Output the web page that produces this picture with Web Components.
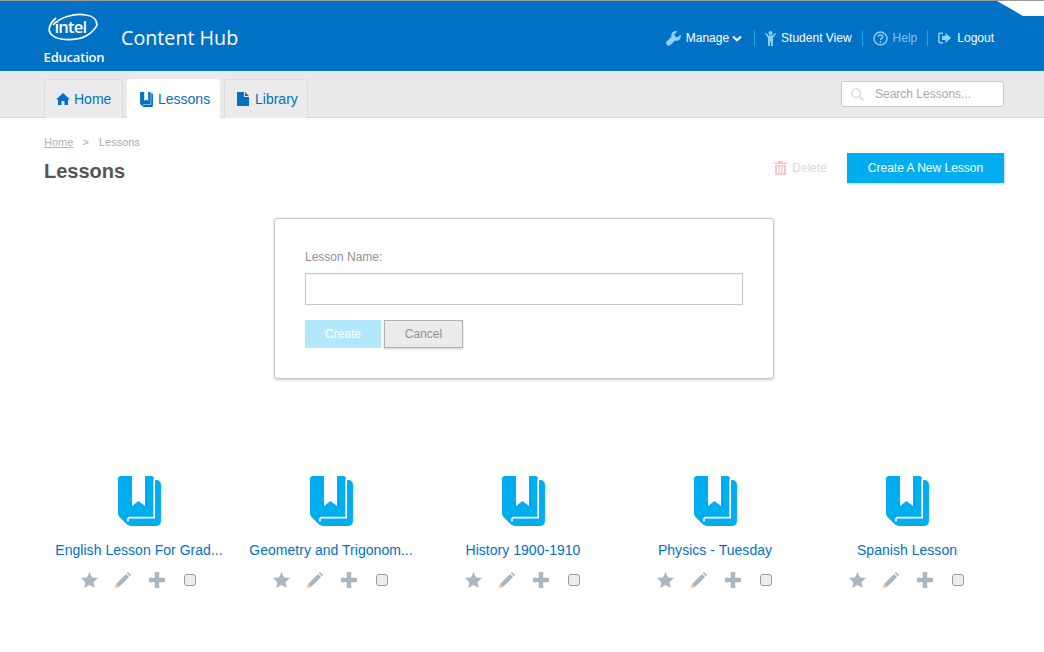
<!DOCTYPE html>
<html>
<head>
<meta charset="utf-8">
<style>
  html, body { margin: 0; padding: 0; background: #fff; }
  body { font-family: "Liberation Sans", Arial, sans-serif; }
</style>
</head>
<body>
<hub-header></hub-header>
<hub-tabs></hub-tabs>
<hub-titlebar></hub-titlebar>
<lesson-form></lesson-form>
<lesson-grid>
  <lesson-card>English Lesson For Grad...</lesson-card>
  <lesson-card>Geometry and Trigonom...</lesson-card>
  <lesson-card>History 1900-1910</lesson-card>
  <lesson-card>Physics - Tuesday</lesson-card>
  <lesson-card>Spanish Lesson</lesson-card>
</lesson-grid>

<script>
// the book is used both in the tab and on the cards, always on white
const bookIcon = (color, w, h) => `
    <svg width="${w}" height="${h}" viewBox="0 0 43 50">
        <path fill="${color}" d="M3 0H14V30L20.500 25 27 30V0H33C35 0 36 1 36 3V4H38C41 4 43 6 43 9V45C43 48 41 50 38 50H13C11 50 9.500 49 8 47.500L2 41.500C.5 40 0 38.500 0 37V3C0 1 1 0 3 0Z"/>
        <path fill="none" stroke="#fff" stroke-width="1.700" d="M36.200 3V41.700H12C10 41.700 9 43.500 10.500 45.500"/>
    </svg>`;

class HubHeader extends HTMLElement {
    constructor() {
        super();
        this.attachShadow({ mode: 'open' });
    }
    connectedCallback() {
        this.shadowRoot.innerHTML = `
            <style>
                :host { display: block; position: relative; height: 70px; background: #0071c5; border-top: 1px solid #9a9a9a; font-family: "Liberation Sans", Arial, sans-serif; }
                .bar { display: flex; align-items: center; height: 70px; padding: 0 50px 0 43px; }
                .logo { display: flex; flex-direction: column; align-items: center; width: 62px; color: #fff; margin-top: 8px; }
                .swoosh { position: relative; width: 50px; height: 27px; margin-left: -3px; top: -1px; }
                .swoosh svg { display: block; overflow: visible; }
                .swoosh span { position: absolute; left: 7px; top: 2px; font: 600 16.500px "Open Sans", "Liberation Sans", sans-serif; letter-spacing: -0.8px; line-height: 22px; }
                .edu { font: 600 13px "Open Sans", "Liberation Sans", sans-serif; line-height: 16px; margin-top: 7px; letter-spacing: -0.2px; }
                .name { font: 400 19.700px "Open Sans", sans-serif; color: #fff; margin-left: 16px; margin-top: 3px; }
                nav { display: flex; align-items: center; margin-left: auto; font-size: 12px; color: #fff; margin-top: 4px; }
                .item { display: flex; align-items: center; height: 16px; gap: 5px; }
                .item + .item { border-left: 1px solid #17a5e6; padding-left: 10px; margin-left: 10px; }
                .item + .item.student { margin-left: 12px; }
                .help { color: #7fc4ee; }
                .corner { position: absolute; right: 0; top: 0; }
            </style>
            <div class="bar">
                <div class="logo">
                    <div class="swoosh">
                        <svg width="50" height="27" viewBox="0 0 50 27" fill="none" stroke="#fff" stroke-width="1.700">
                            <path d="M8 4C1 10-1 17 4 21 10 27 28 27 38 22 43 19 47 16 49 11"/>
                            <path d="M5 11C12 3 27-1 38 1 45 2 49 6 49 11"/>
                        </svg>
                        <span>intel</span>
                    </div>
                    <div class="edu">Education</div>
                </div>
                <div class="name">Content Hub</div>
                <nav>
                    <div class="item">
                        <svg width="15" height="15" viewBox="0 0 15 15"><path fill="#8fd0f5" d="M14.600 3.400L11.600 6.300 9 5.600 8.400 3.200 11.400.3C9.600-.4 7.700 0 6.500 1.200 5.200 2.500 5 4.200 5.500 5.700L.6 10.600C-.2 11.400-.2 12.700.6 13.500L1.300 14.200C2.100 15 3.400 15 4.200 14.200L9.100 9.400C10.700 9.900 12.400 9.600 13.600 8.400 14.900 7.100 15.200 5 14.600 3.400Z"/></svg>
                        <span>Manage</span>
                        <svg style="margin-left:-2px" width="10" height="7" viewBox="0 0 10 7"><path d="M1 1.500L5 5.300 9 1.500" fill="none" stroke="#fff" stroke-width="2"/></svg>
                    </div>
                    <div class="item student">
                        <svg width="11" height="15" viewBox="0 0 11 15"><circle cx="5.500" cy="2" r="2" fill="#8fd0f5"/><path fill="#8fd0f5" d="M0 2.500L1 1.800 3.500 4.500H7.500L10 1.800 11 2.500 8 7V15H6V10.500H5V15H3V7Z"/></svg>
                        <span>Student View</span>
                    </div>
                    <div class="item help">
                        <svg width="15" height="15" viewBox="0 0 15 15"><circle cx="7.500" cy="7.500" r="6.500" fill="none" stroke="#8fd0f5" stroke-width="1.400"/><path d="M5.300 5.800C5.300 3.300 9.800 3.300 9.800 5.800 9.800 7.500 7.500 7.400 7.500 9" fill="none" stroke="#8fd0f5" stroke-width="1.500"/><rect x="6.700" y="10" width="1.600" height="1.700" fill="#8fd0f5"/></svg>
                        <span>Help</span>
                    </div>
                    <div class="item">
                        <svg width="13" height="12" viewBox="0 0 13 12"><path d="M5 1.200H2C1.200 1.200.8 1.700.8 2.500V9.500C.8 10.300 1.200 10.800 2 10.800H5" fill="none" stroke="#8fd0f5" stroke-width="1.500"/><path fill="#8fd0f5" d="M7.500 1L13 6 7.500 11V8H4V4H7.500Z"/></svg>
                        <span style="margin-left:1px">Logout</span>
                    </div>
                </nav>
            </div>
            <svg class="corner" width="48" height="16" viewBox="0 0 48 16"><path d="M1 0L27 15H48V0Z" fill="#fff"/></svg>
        `;
    }
}

class HubTabs extends HTMLElement {
    constructor() {
        super();
        this.attachShadow({ mode: 'open' });
    }
    connectedCallback() {
        this.shadowRoot.innerHTML = `
            <style>
                :host { display: flex; align-items: flex-end; height: 46px; background: #e9e9e9; border-bottom: 1px solid #d6d6d6; padding: 0 40px 0 44px; font-family: "Liberation Sans", Arial, sans-serif; }
                .tab { display: flex; align-items: center; gap: 4px; box-sizing: border-box; height: 39px; margin-bottom: -1px; border: 1px solid #d9d9d9; border-bottom: 0; border-radius: 4px 4px 0 0; background: #ebebeb; color: #0071c5; font-size: 14px; margin-right: 4px; }
                .tab.on { background: #fff; border-color: #fff; height: 39px; }
                .search { display: flex; align-items: center; box-sizing: border-box; width: 163px; height: 26px; margin: 0 0 10px auto; padding-left: 9px; background: #fff; border: 1px solid #c8c8c8; border-radius: 3px; color: #a8a8a8; font-size: 12px; gap: 11px; }
            </style>
            <div class="tab" style="width:79px;padding-left:11px">
                <svg width="14" height="12" viewBox="0 0 14 12"><path fill="#0071c5" d="M7 0L14 6.500H12V12H8.500V8H5.500V12H2V6.500H0Z"/></svg>
                <span>Home</span>
            </div>
            <div class="tab on" style="width:93px;padding-left:12px;gap:5px">
                ${bookIcon('#0071c5', 13, 15)}
                <span>Lessons</span>
            </div>
            <div class="tab" style="width:84px;padding-left:12px;gap:6px">
                <svg width="12" height="14" viewBox="0 0 12 14"><path fill="#0071c5" d="M0 0H7V5H12V14H0ZM8 0L12 4H8Z"/></svg>
                <span>Library</span>
            </div>
            <div class="search">
                <svg width="13" height="13" viewBox="0 0 13 13"><circle cx="5.200" cy="5.200" r="4.200" fill="none" stroke="#d8d8d8" stroke-width="1.500"/><path d="M8.400 8.400L12.300 12.300" stroke="#d8d8d8" stroke-width="2"/></svg>
                <span>Search Lessons...</span>
            </div>
        `;
    }
}

class HubTitlebar extends HTMLElement {
    constructor() {
        super();
        this.attachShadow({ mode: 'open' });
    }
    connectedCallback() {
        this.shadowRoot.innerHTML = `
            <style>
                :host { display: flex; justify-content: space-between; padding: 18px 40px 0 44px; height: 82px; box-sizing: content-box; font-family: "Liberation Sans", Arial, sans-serif; }
                .crumbs { font-size: 11px; color: #a9a9a9; line-height: 13px; }
                .crumbs u { color: #a9b4c0; }
                .crumbs i { font-style: normal; margin: 0 7px 0 6px; }
                h1 { margin: 10px 0 0; font-size: 20px; line-height: 24px; color: #555; font-weight: bold; }
                .actions { display: flex; align-items: flex-start; padding-top: 17px; }
                .del { display: flex; align-items: center; gap: 5px; height: 30px; color: #d9d9d9; font-size: 12px; }
                .new { box-sizing: border-box; width: 157px; height: 30px; margin-left: 20px; background: #00aeef; color: #fff; font-size: 12px; line-height: 30px; text-align: center; box-shadow: 1px 1px 2px rgba(0,0,0,.2); }
            </style>
            <div>
                <div class="crumbs"><u>Home</u><i> &gt; </i>Lessons</div>
                <h1>Lessons</h1>
            </div>
            <div class="actions">
                <div class="del">
                    <svg width="13" height="14" viewBox="0 0 13 14"><path fill="#fcc4c6" d="M4 0H9V1.500H13V3H0V1.500H4ZM1 4H12V14H1ZM3 5.500V12.500H4.500V5.500ZM5.800 5.500V12.500H7.200V5.500ZM8.500 5.500V12.500H10V5.500Z"/></svg>
                    <span>Delete</span>
                </div>
                <div class="new">Create A New Lesson</div>
            </div>
        `;
    }
}

class LessonForm extends HTMLElement {
    constructor() {
        super();
        this.attachShadow({ mode: 'open' });
    }
    connectedCallback() {
        this.shadowRoot.innerHTML = `
            <style>
                :host { display: block; box-sizing: border-box; width: 500px; height: 161px; margin-left: 274px; padding: 31px 30px 0; background: #fff; border: 1px solid #c4c4c4; border-radius: 3px; box-shadow: 0 1px 3px rgba(0,0,0,.2); font-family: "Liberation Sans", Arial, sans-serif; font-size: 12px; }
                label { display: block; color: #8f8f8f; line-height: 14px; }
                .field { box-sizing: border-box; width: 438px; height: 32px; margin-top: 9px; border: 1px solid #c6c6c6; box-shadow: inset 0 1px 1px rgba(0,0,0,.04); }
                .btns { display: flex; gap: 3px; margin-top: 15px; }
                .btn { box-sizing: border-box; height: 28px; line-height: 28px; text-align: center; }
                .create { width: 76px; background: #b3e7fb; color: #fff; }
                .cancel { width: 79px; background: #ebebeb; color: #909090; border: 1px solid #b0b0b0; line-height: 26px; box-shadow: 0 1px 2px rgba(0,0,0,.2); }
            </style>
            <label>Lesson Name:</label>
            <div class="field"></div>
            <div class="btns">
                <div class="btn create">Create</div>
                <div class="btn cancel">Cancel</div>
            </div>
        `;
    }
}

class LessonGrid extends HTMLElement {
    constructor() {
        super();
        this.attachShadow({ mode: 'open' });
    }
    connectedCallback() {
        this.shadowRoot.innerHTML = `
            <style>
                :host { display: block; padding: 97px 41px 0 43px; }
                .row { display: grid; grid-template-columns: repeat(5, 192px); }
            </style>
            <div class="row"><slot></slot></div>
        `;
    }
}

class LessonCard extends HTMLElement {
    constructor() {
        super();
        this.attachShadow({ mode: 'open' });
    }
    connectedCallback() {
        this.shadowRoot.innerHTML = `
            <style>
                :host { display: flex; flex-direction: column; align-items: center; font-family: "Liberation Sans", Arial, sans-serif; }
                .title { margin-top: 16px; font-size: 14px; line-height: 16px; color: #0071c5; white-space: nowrap; letter-spacing: 0.03px; }
                .tools { display: flex; align-items: center; margin-top: 13px; height: 18px; margin-left: -1px; }
                .tools svg { display: block; }
                .box { box-sizing: border-box; width: 12px; height: 12px; margin-left: 19px; background: #ececec; border: 1px solid #999; border-radius: 3px; }
            </style>
            ${bookIcon('#00aeef', 43, 50)}
            <div class="title"><slot></slot></div>
            <div class="tools">
                <svg width="17" height="16" viewBox="0 0 17 16"><path fill="#a8b6c1" d="M8.500 0L11 5.400 17 6.100 12.600 10.100 13.800 16 8.500 13 3.200 16 4.400 10.100 0 6.100 6 5.400Z"/></svg>
                <svg style="margin-left:16px" width="18" height="18" viewBox="0 0 18 18"><path fill="#a8b6c1" d="M14 1L17 4 15.800 5.200 12.800 2.200ZM12 3L15 6 5 16 1 17 2 13Z"/><path fill="#e8c8a8" d="M1 17L2 13 5 16Z"/></svg>
                <svg style="margin-left:17px" width="16" height="16" viewBox="0 0 16 16"><path fill="#a8b6c1" d="M5.800 0H10.200V5.800H16V10.200H10.200V16H5.800V10.200H0V5.800H5.800Z"/></svg>
                <div class="box"></div>
            </div>
        `;
    }
}

customElements.define('hub-header', HubHeader);
customElements.define('hub-tabs', HubTabs);
customElements.define('hub-titlebar', HubTitlebar);
customElements.define('lesson-form', LessonForm);
customElements.define('lesson-grid', LessonGrid);
customElements.define('lesson-card', LessonCard);
</script>
</body>
</html>
